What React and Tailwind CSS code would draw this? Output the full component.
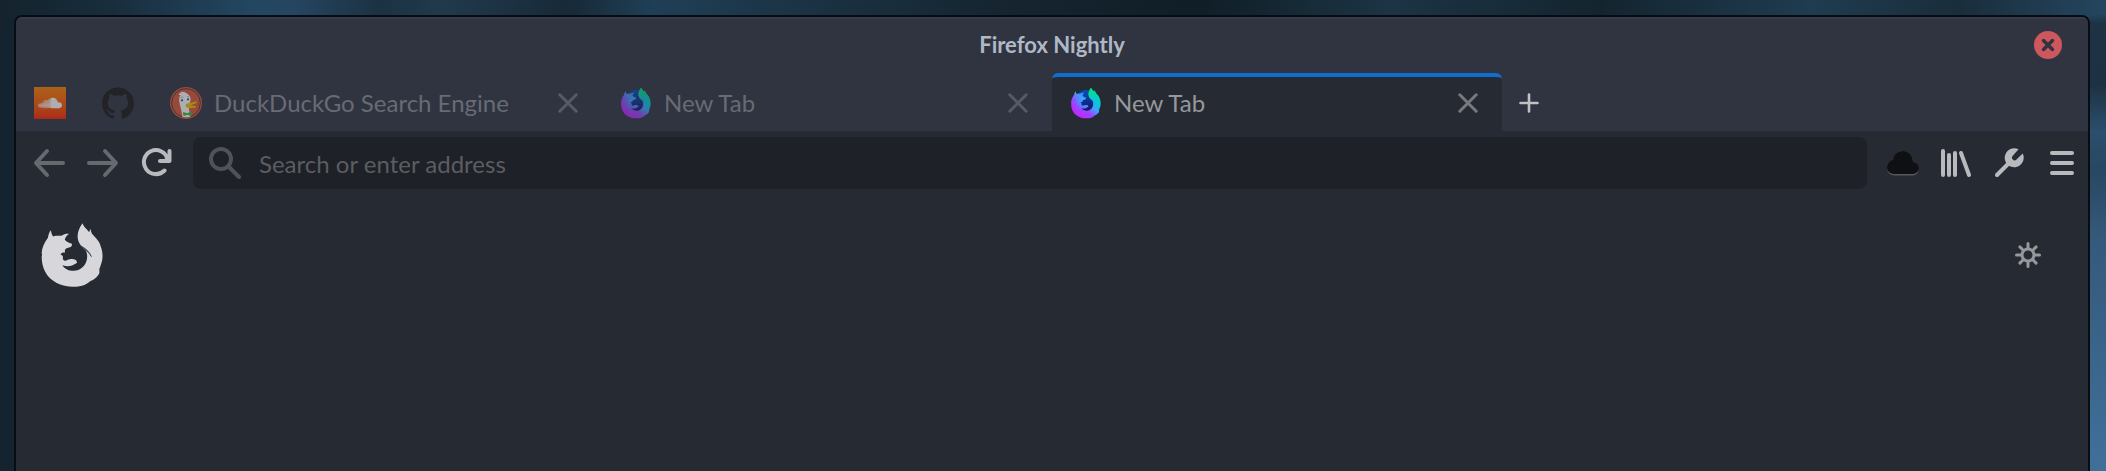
import { useId } from "react";
import { SiGithub } from "react-icons/si";
import { FaSoundcloud } from "react-icons/fa";

const FOX =
  "M152 690C153 698 155 704 159 709C168 705 176 708 186 706C191 702 199 700 207 701C200 705 196 711 194 719C202 727 209 730 216 731C216 735 215 739 212 741C205 744 199 744 195 748C194 752 195 756 193 759C189 756 184 758 181 764C185 764 188 767 189 771C187 775 188 779 192 782C201 783 206 776 216 777C224 777 230 780 231 786C233 791 226 790 222 794C213 800 200 801 187 796C194 808 207 813 220 813C245 813 262 794 262 769C262 762 260 756 258 751C242 738 233 725 233 708C233 693 240 680 248 669C251 680 260 685 268 696C269 692 270 689 272 686C273 692 275 697 277 701C292 716 300 725 303 739C309 753 310 770 307 783C304 793 303 798 299 807L299 820C292 834 280 840 270 845C258 856 244 861 218 861C190 861 164 850 147 833C133 818 124 797 124 769C125 766 126 763 124 760C124 745 132 728 143 713C144 704 147 696 152 690Z";

const SLIT = "M244 738C258 746 270 756 275 770C267 757 255 747 244 738Z";

function FoxMark({ className }) {
  return (
    <svg viewBox="122 668 188 194" className={className} aria-hidden="true">
      <path d={FOX} fill="#d7d7db" />
      <path d={SLIT} fill="#262a33" stroke="#262a33" strokeWidth="1.5" />
    </svg>
  );
}

function NightlyIcon({ className }) {
  const id = useId();
  return (
    <svg viewBox="117 668 200 194" className={className} aria-hidden="true">
      <defs>
        <linearGradient id={id + "a"} x1="0.85" y1="0.1" x2="0.25" y2="0.85">
          <stop offset="0" stopColor="#00e07a" />
          <stop offset="0.28" stopColor="#00cfd8" />
          <stop offset="0.52" stopColor="#3fa0ff" />
          <stop offset="0.75" stopColor="#9a45ff" />
          <stop offset="1" stopColor="#bb2bff" />
        </linearGradient>
        <linearGradient id={id + "b"} x1="0" y1="0" x2="0" y2="1">
          <stop offset="0" stopColor="#0250bb" />
          <stop offset="1" stopColor="#15125e" />
        </linearGradient>
        <radialGradient id={id + "c"} cx="0.42" cy="0.42" r="0.4">
          <stop offset="0" stopColor="#35b5ff" />
          <stop offset="0.5" stopColor="#4b8cff" stopOpacity="0.7" />
          <stop offset="1" stopColor="#8a50ff" stopOpacity="0" />
        </radialGradient>
        <linearGradient id={id + "d"} x1="0" y1="0" x2="0.4" y2="1">
          <stop offset="0" stopColor="#00e86a" />
          <stop offset="0.45" stopColor="#00d8a8" />
          <stop offset="1" stopColor="#16b8f5" stopOpacity="0" />
        </linearGradient>
      </defs>
      <circle cx="220" cy="754" r="70" fill={`url(#${id}b)`} />
      <path d={FOX} fill={`url(#${id}a)`} />
      <path d={FOX} fill={`url(#${id}c)`} />
      <path
        d="M248 669C233 690 228 712 240 732C252 746 268 755 276 780L309 780C310 750 300 725 277 701L272 686L268 696Z"
        fill={`url(#${id}d)`}
      />
    </svg>
  );
}

function DuckIcon({ className }) {
  return (
    <svg viewBox="0 0 96 96" className={className} aria-hidden="true">
      <circle cx="48" cy="48" r="48" fill="#de5833" />
      <circle cx="48" cy="48" r="43" fill="none" stroke="#303440" strokeWidth="2.5" />
      <path
        d="M27 24C25 19 31 17 36 14C43 14 57 20 61 31C64 41 58 49 57 57C56 68 60 80 61 90C53 92 44 92 37 90C37 76 30 58 28 44C26 34 28 29 32 25Z"
        fill="#fff"
      />
      <circle cx="36" cy="40" r="3.4" fill="#2d4f8e" />
      <circle cx="54" cy="37" r="3.2" fill="#2d4f8e" />
      <path d="M31 33C33 30 37 30 40 31M51 30C53 28 56 28 58 30" stroke="#7b8fb5" strokeWidth="2" fill="none" />
      <path
        d="M47 53C50 47 57 48 62 47C70 46 76 42 81 44C82 48 70 52 63 54C68 58 78 56 80 58C77 63 66 65 59 63C51 62 45 59 47 53Z"
        fill="#f7c600"
      />
      <path d="M40 75L52 79L65 73C67 78 67 84 64 88L52 83L41 87C39 83 38 78 40 75Z" fill="#4cb13c" />
    </svg>
  );
}

function CloseGlyph({ className }) {
  return (
    <svg viewBox="0 0 20 20" className={className} aria-hidden="true">
      <path d="M1.8 1.8L18.2 18.2M18.2 1.8L1.8 18.2" stroke="currentColor" strokeWidth="3" strokeLinecap="round" />
    </svg>
  );
}

function PinnedTab({ label, children }) {
  return (
    <button type="button" role="tab" aria-selected="false" aria-label={label} className="flex w-[68px] shrink-0 items-center justify-center pt-0.5">
      <span className="opacity-60">{children}</span>
    </button>
  );
}

function Tab({ title, icon, active }) {
  return (
    <div
      className={
        active
          ? "flex w-[450px] items-center rounded-t-md border-t-4 border-[#0f6fd1] bg-[#262a33] pr-6 pb-0.5 pl-[18px]"
          : "flex w-[450px] items-center pt-0.5 pr-6 pl-[18px]"
      }
    >
      <button type="button" role="tab" aria-selected={active ? "true" : "false"} className="flex min-w-0 grow items-center gap-3 text-left">
        <span className={active ? "shrink-0" : "shrink-0 opacity-60"}>{icon}</span>
        <span className={active ? "truncate text-2xl text-[#96989b]" : "truncate text-2xl text-[#676b74]"}>{title}</span>
      </button>
      <button type="button" aria-label={"Close " + title} className={active ? "text-[#77797e]" : "text-[#565a64]"}>
        <CloseGlyph className="size-5" />
      </button>
    </div>
  );
}

function ToolButton({ label, children, className }) {
  return (
    <button type="button" aria-label={label} className={"flex size-8 shrink-0 items-center justify-center " + (className || "text-[#b9babd]")}>
      <svg viewBox="0 0 32 32" className="size-8" fill="none" stroke="currentColor" strokeWidth="4" strokeLinecap="round" strokeLinejoin="round" aria-hidden="true">
        {children}
      </svg>
    </button>
  );
}

export default function App() {
  return (
    <div className="flex min-h-screen flex-col bg-[linear-gradient(90deg,#14232e_0%,#182c3a_5%,#234762_12%,#264560_14%,#1b3242_18%,#203a4c_21%,#182937_27%,#1f3f56_31%,#1b3344_38%,#15242f_48%,#101e27_57%,#1c3444_66%,#14242f_76%,#1f3c50_86%,#1a2d3b_93%,#24465f_100%)] font-['Lato',sans-serif]">
      <div className="flex grow bg-[linear-gradient(180deg,transparent_0%,transparent_3%,#1d3343_5%,#1c3242_18%,#2c4f6d_28%,#284761_36%,#35597a_50%,#40709a_100%)] bg-[length:16px_100%] bg-right bg-no-repeat pt-[15px] pr-4 pl-[14px]">
        <div className="flex grow flex-col overflow-hidden rounded-t-lg border-2 border-b-0 border-[#080d13] bg-[#262a33]">
          <header className="bg-[#303440]">
            <div className="grid h-14 grid-cols-[1fr_auto_1fr] items-center border-t-2 border-[#363b49] px-[26px] pb-0.5">
              <span />
              <h1 className="text-[22px] leading-7 font-bold text-[#afb8c6]">Firefox Nightly</h1>
              <button type="button" aria-label="Close window" className="flex size-7 items-center justify-center justify-self-end rounded-full bg-[#cc575d] text-[#303440]">
                <svg viewBox="0 0 28 28" className="size-7" aria-hidden="true">
                  <path d="M9.5 9.5L18.5 18.5M18.5 9.5L9.5 18.5" stroke="currentColor" strokeWidth="3.4" strokeLinecap="round" />
                </svg>
              </button>
            </div>
            <div role="tablist" className="flex h-[58px]">
              <PinnedTab label="SoundCloud">
                <span className="flex size-8 items-center justify-center bg-linear-to-b from-[#ff8000] to-[#ff2000]">
                  <FaSoundcloud className="size-6 text-white" />
                </span>
              </PinnedTab>
              <PinnedTab label="GitHub">
                <SiGithub className="size-8 text-[#191717]" />
              </PinnedTab>
              <Tab title="DuckDuckGo Search Engine" icon={<DuckIcon className="size-8" />} />
              <Tab title="New Tab" icon={<NightlyIcon className="size-8" />} />
              <Tab title="New Tab" icon={<NightlyIcon className="size-8" />} active />
              <button type="button" aria-label="Open a new tab" className="flex w-[54px] items-center justify-center pt-0.5 text-[#c0c1c4]">
                <svg viewBox="0 0 20 20" className="size-5" aria-hidden="true">
                  <path d="M10 1.5V18.5M1.5 10H18.5" stroke="currentColor" strokeWidth="2.6" strokeLinecap="round" />
                </svg>
              </button>
            </div>
          </header>

          <nav className="flex items-center gap-5 py-1.5 pr-2.5 pl-[17px]">
            <div className="flex gap-[22px]">
              <ToolButton label="Back" className="text-[#66696e]">
                <path d="M30 16H3M14 4L3 16L14 28" />
              </ToolButton>
              <ToolButton label="Forward" className="text-[#66696e]">
                <path d="M2 16H29M18 4L29 16L18 28" />
              </ToolButton>
              <ToolButton label="Reload">
                <path d="M23.5 23.5A12 12 0 1 1 26.5 12M28.5 4V14H19" />
                <path d="M22 14L28.5 7V14Z" fill="currentColor" strokeWidth="1" />
              </ToolButton>
            </div>
            <label className="flex h-[52px] grow items-center gap-[18px] rounded-lg bg-[#1e2128] px-4">
              <svg viewBox="0 0 32 32" className="size-8 shrink-0 text-[#505257]" fill="none" stroke="currentColor" strokeWidth="4" strokeLinecap="round" aria-hidden="true">
                <circle cx="12" cy="12" r="10" />
                <path d="M19.5 19.5L30 30" />
              </svg>
              <input
                type="text"
                aria-label="Search or enter address"
                placeholder="Search or enter address"
                className="w-full bg-transparent pt-0.5 text-2xl text-[#96989b] outline-none placeholder:text-[#5b5d61]"
              />
            </label>
            <div className="flex gap-[21px]">
              <ToolButton label="Cloud">
                <path d="M8 28.500C3.500 28.500 0 25.500 0 21C0 16.800 3 13.800 6 13.300C6.500 8 10.500 4 16 4C21.500 4 26 8.500 26 15C29.500 15.500 32 18.500 32 21.500C32 26 29 28.500 25 28.500Z" fill="#55575c" stroke="none" />
                <path d="M8 27C3.500 27 0 24.500 0 20.500C0 16.500 3 13.500 6 13C6.500 7.500 10.500 4 16 4C21.500 4 26 8.500 26 15C29.500 15.500 32 18 32 21C32 24.500 29 27 25 27Z" fill="#0e1014" stroke="none" />
              </ToolButton>
              <ToolButton label="Library">
                <path d="M3 4V28M9 8V28M15 6V28M21 6L29 28" />
              </ToolButton>
              <ToolButton label="Developer">
                <path d="M4 28L17 15" />
                <path d="M25.500 2.300A9.500 9.500 0 1 0 29.700 6.500L23.500 12.500A2.500 2.500 0 0 1 19.800 8.800Z" fill="currentColor" stroke="none" />
              </ToolButton>
              <ToolButton label="Menu">
                <path d="M6 6H26M6 16H26M6 26H26" />
              </ToolButton>
            </div>
          </nav>

          <main className="flex items-start justify-between pt-7 pr-[47px] pl-[25px]">
            <FoxMark className="h-16 w-[62px]" />
            <button type="button" aria-label="Customize your New Tab page" className="mt-[19px] text-[#96989c]">
              <svg viewBox="0 0 26 26" className="size-[26px]" fill="none" stroke="currentColor" strokeWidth="3" strokeLinecap="round" aria-hidden="true">
                <circle cx="13" cy="13" r="6" />
                <path d="M13 1.500V6M13 20V24.500M1.500 13H6M20 13H24.500M4.900 4.900L8.200 8.200M17.800 17.800L21.100 21.100M21.100 4.900L17.800 8.200M8.200 17.800L4.900 21.100" />
              </svg>
            </button>
          </main>
        </div>
      </div>
    </div>
  );
}
